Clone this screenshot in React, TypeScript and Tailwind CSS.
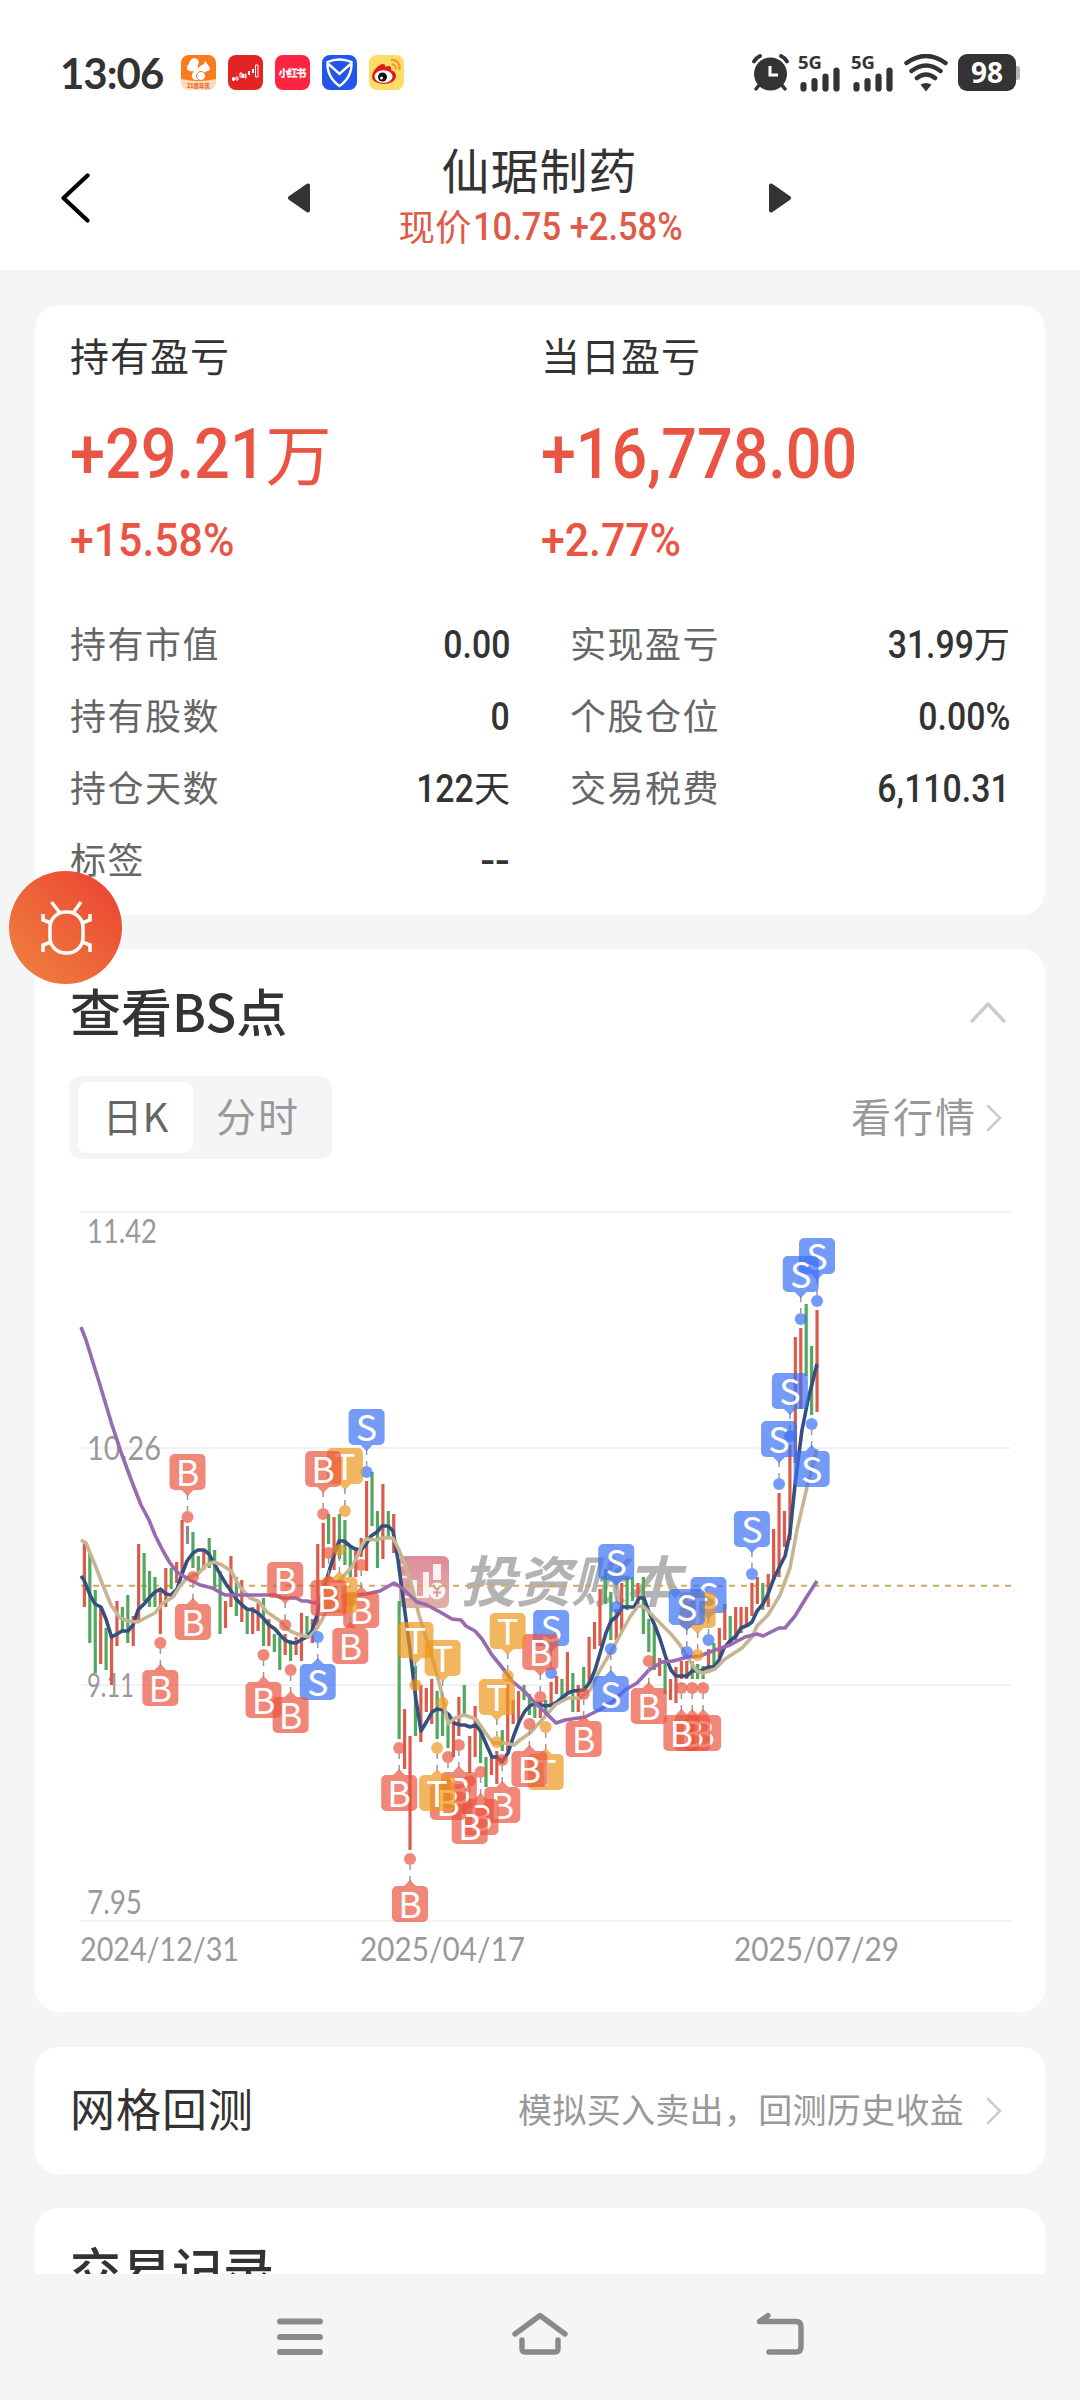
import type { ReactNode } from "react";

type MarkerType = "B" | "S" | "T";

// [high y, low y, colour]
const candles: [number, number, string][] = [
  [1541, 1607, "r"], [1553, 1643, "g"], [1590, 1673, "g"], [1607, 1664, "r"], [1628, 1670, "g"],
  [1637, 1685, "r"], [1601, 1646, "r"], [1607, 1631, "g"], [1595, 1643, "g"], [1616, 1646, "r"],
  [1544, 1622, "r"], [1553, 1601, "g"], [1571, 1607, "g"], [1577, 1607, "g"], [1590, 1634, "r"],
  [1568, 1607, "r"], [1568, 1589, "g"], [1562, 1583, "r"], [1520, 1573, "r"], [1526, 1544, "n"],
  [1532, 1568, "g"], [1556, 1573, "g"], [1550, 1570, "r"], [1538, 1568, "g"], [1550, 1589, "g"],
  [1571, 1634, "g"], [1601, 1628, "r"], [1556, 1607, "r"], [1577, 1616, "g"], [1580, 1622, "r"],
  [1610, 1634, "g"], [1607, 1634, "r"], [1603, 1631, "r"], [1598, 1646, "g"], [1619, 1646, "r"],
  [1634, 1652, "g"], [1637, 1670, "g"], [1634, 1655, "r"], [1640, 1661, "g"], [1637, 1655, "r"],
  [1613, 1661, "r"], [1616, 1634, "g"], [1619, 1643, "r"], [1544, 1628, "r"], [1523, 1568, "r"],
  [1514, 1544, "g"], [1517, 1570, "r"], [1514, 1559, "g"], [1520, 1565, "g"], [1547, 1577, "g"],
  [1547, 1577, "r"], [1538, 1557, "r"], [1481, 1571, "r"], [1472, 1526, "g"], [1511, 1568, "g"],
  [1484, 1559, "r"], [1511, 1537, "g"], [1514, 1553, "r"], [1601, 1739, "g"], [1709, 1769, "r"],
  [1736, 1850, "r"], [1666, 1736, "g"], [1685, 1742, "r"], [1688, 1712, "r"], [1679, 1724, "r"],
  [1691, 1739, "g"], [1712, 1736, "g"], [1715, 1748, "g"], [1723, 1757, "r"], [1697, 1736, "r"],
  [1685, 1716, "g"], [1736, 1773, "r"], [1706, 1757, "r"], [1726, 1763, "g"], [1757, 1787, "g"],
  [1755, 1775, "r"], [1751, 1784, "r"], [1730, 1751, "g"], [1684, 1751, "r"], [1700, 1724, "r"],
  [1691, 1721, "r"], [1685, 1700, "g"], [1694, 1715, "g"], [1703, 1718, "g"], [1701, 1718, "r"],
  [1700, 1715, "g"], [1682, 1706, "r"], [1676, 1694, "r"], [1679, 1700, "g"], [1652, 1694, "r"],
  [1673, 1712, "g"], [1685, 1712, "r"], [1667, 1691, "g"], [1637, 1684, "r"], [1622, 1649, "r"],
  [1589, 1646, "r"], [1569, 1604, "g"], [1592, 1640, "g"], [1609, 1640, "r"], [1583, 1631, "r"],
  [1577, 1610, "g"], [1577, 1601, "g"], [1583, 1604, "r"], [1577, 1634, "g"], [1619, 1652, "g"],
  [1626, 1670, "g"], [1658, 1676, "r"], [1661, 1694, "g"], [1679, 1700, "r"], [1667, 1703, "r"],
  [1661, 1679, "r"], [1661, 1679, "r"], [1661, 1679, "g"], [1664, 1679, "g"], [1666, 1679, "g"],
  [1649, 1673, "r"], [1643, 1667, "g"], [1628, 1657, "r"], [1604, 1640, "r"], [1616, 1643, "g"],
  [1607, 1640, "r"], [1607, 1633, "r"], [1607, 1627, "r"], [1583, 1616, "r"], [1577, 1604, "r"],
  [1583, 1610, "g"], [1574, 1607, "r"], [1529, 1580, "r"], [1493, 1577, "r"], [1511, 1547, "r"],
  [1445, 1540, "r"], [1337, 1463, "r"], [1328, 1409, "r"], [1304, 1376, "g"], [1346, 1415, "g"],
  [1310, 1412, "r"],
];

const candleColors: Record<string, string> = { r: "#dc5b4b", g: "#53a85f", n: "#8c8c8c" };

// [candle index, type, side of the label, dot y]
const markers: [number, MarkerType, "up" | "down", number][] = [
  [14, "B", "down", 1643], [19, "B", "up", 1517], [20, "B", "down", 1577], [33, "B", "down", 1655],
  [37, "B", "up", 1625], [38, "B", "down", 1670], [43, "S", "down", 1637], [44, "B", "up", 1514],
  [45, "B", "down", 1553], [47, "T", "down", 1550], [48, "T", "up", 1511], [49, "B", "down", 1601],
  [51, "B", "down", 1565], [52, "S", "up", 1472], [58, "B", "down", 1748], [60, "B", "down", 1859],
  [61, "T", "up", 1685], [65, "T", "down", 1748], [66, "T", "up", 1703], [67, "B", "down", 1757],
  [69, "B", "down", 1745], [71, "B", "down", 1781], [73, "B", "down", 1772], [76, "T", "up", 1742],
  [77, "B", "down", 1760], [78, "T", "up", 1676], [82, "B", "down", 1724], [84, "B", "up", 1697],
  [85, "T", "down", 1727], [86, "S", "up", 1673], [92, "B", "down", 1694], [97, "S", "down", 1649],
  [98, "S", "up", 1607], [104, "B", "down", 1661], [110, "B", "down", 1688], [111, "S", "up", 1652],
  [112, "B", "down", 1688], [113, "T", "up", 1655], [114, "B", "down", 1688], [115, "S", "up", 1640],
  [123, "S", "up", 1574], [128, "S", "up", 1484], [130, "S", "up", 1436], [132, "S", "up", 1319],
  [134, "S", "down", 1424], [135, "S", "up", 1301],
];

const markerColors: Record<MarkerType, string> = { B: "#e9543f", S: "#3b70f7", T: "#ee971c" };

const ma5 =
  "81,1576 84,1580 90,1595 95,1604 101,1607 106,1619 111.5,1637 117,1634 122,1631 128,1631 133,1625 138,1610 144,1604 149,1598 155,1592 160.5,1589 166,1594 171,1595 177,1589 182,1574 187,1561 193,1553 198,1550 204,1550 209,1554 214,1563 220,1574 226,1584 231,1591 237,1600 242,1605 247,1609 253,1610 258,1613 264,1619 269,1625 275,1629 280,1635 285,1640 290,1642.5 296,1643 301,1640 307,1637 312,1631 317,1615 322,1595 328,1575 334,1555 339,1541 344,1541 350,1546 355,1549 361,1550 366,1544 371,1536 377,1532 382,1526 388,1526 393,1531 398,1560 402,1590 410,1650 416,1700 421,1731 427,1721 432,1712 437,1709 443,1710 449,1715 454,1723 460,1725 465,1725 470,1727 476,1725 481,1732 487,1746 492,1757 497,1757 502,1762 508,1753 514,1735 519,1722 525,1711 530,1706 535,1703 541,1705 546,1706 552,1705 557,1702 563,1697 568,1693 573,1691 584,1690 590,1682 595,1670 601,1650 606,1633 611,1621 617,1616 622,1607 634,1607 639,1598 644,1598 649,1612 655,1626 660,1639 666,1658 671,1670 676,1676 687,1676 692,1671 700,1671 708,1667 714,1667 719,1660 724,1648 730,1641 736,1636 741,1628 748,1625 752,1622 757,1611 763,1604 768,1594 774,1578 779,1568 785,1556 790,1533 795,1485 802,1430 808,1400 817,1364";
const ma10 =
  "81,1540 86,1543 95,1565 104,1588 111,1605 120,1618 128,1621 138,1622 147,1617 155,1613 163,1603 173,1597 180,1586 187,1578 198,1574 206,1565 214,1562 222,1565 231,1571 240,1587 250,1598 258,1601 267,1612 280,1621 290,1631 300,1635 309,1637 315,1631 322,1620 331,1600 340,1580 352,1567 358,1555 362,1545 366,1539 377,1540 382,1538 393,1538 399,1550 409,1575 419,1615 430,1650 441,1690 448,1724 455,1718 464,1715 476,1719 485,1732 493,1743 505,1743 514,1745 520,1740 530,1733 541,1721 555,1705 568,1698 580,1698 590,1690 600,1670 612,1650 620,1635 630,1617 638,1606 644,1607 654,1617 671,1634 680,1645 690,1661 697,1671 703,1673 715,1669 725,1659 742,1648 752,1637 757,1626 768,1615 780,1595 790,1568 797,1530 807,1487 817,1449";
const ma30 =
  "81,1327 86,1340 100,1385 112,1425 122,1455 132,1482 141,1505 149,1520 155,1535 163,1551 170,1563 177,1572 190,1580 200,1585 212,1588 225,1595 275,1595 282,1598 296,1598 302,1601 307,1601 314,1603 325,1599 340,1597 355,1595 366,1594 380,1591 394,1583 402,1588 417,1602 427,1605 440,1612 452,1619 461,1620 466,1626 475,1631 482,1639 492,1655 505,1671 512,1681 525,1692 535,1703 545,1712 556,1723 565,1720 585,1717 601,1709 612,1702 625,1690 637,1683 649,1670 662,1662 673,1661 688,1657 700,1656 715,1650 730,1645 745,1637 757,1634 763,1636 779,1628 785,1628 795,1616 806,1598 817,1581";

const axisLabels: [string, number, number, number][] = [
  ["11.42", 87, 1243, 70],
  ["10.26", 87, 1460, 74],
  ["9.11", 87, 1697, 47],
  ["7.95", 87, 1914, 55],
  ["2024/12/31", 80, 1961, 159],
  ["2025/04/17", 360, 1961, 165],
  ["2025/07/29", 734, 1961, 165],
];

const candleX = (i: number) => 84.4 + i * 5.427;

function Marker({ x, y, type, side }: { x: number; y: number; type: MarkerType; side: "up" | "down" }) {
  const top = side === "up" ? y - 63 : y + 27;
  const dir = side === "up" ? -1 : 1;
  return (
    <g>
      <path d={`M${x} ${y + dir * 6}v${dir * 5}m0 ${dir * 6}v${dir * 6}`} stroke="#999" strokeWidth="1.5" />
      <circle cx={x} cy={y} r="6" fill={markerColors[type]} fillOpacity="0.7" />
      <path
        d={
          side === "up"
            ? `M${x - 13} ${top}h26a5 5 0 0 1 5 5v26a5 5 0 0 1-5 5h-7l-6 6l-6-6h-7a5 5 0 0 1-5-5v-26a5 5 0 0 1 5-5z`
            : `M${x - 13} ${top}h7l6-6l6 6h7a5 5 0 0 1 5 5v26a5 5 0 0 1-5 5h-26a5 5 0 0 1-5-5v-26a5 5 0 0 1 5-5z`
        }
        fill={markerColors[type]}
        fillOpacity="0.7"
      />
      <text x={x} y={top + 31.5} textAnchor="middle" fontSize="36" fill="#fff">
        {type}
      </text>
    </g>
  );
}

function KLineChart() {
  return (
    <svg viewBox="35 1159 1010 853" className="block w-[1010px] h-[853px] font-['Noto_Sans_CJK_SC',sans-serif]">
      <path d="M81 1212h930M81 1448h930M81 1685h930M81 1921h930" stroke="#f1f1f3" strokeWidth="2" />

      {/* Watermark */}
      <defs>
        <linearGradient id="watermark" x1="0" y1="0" x2="0" y2="1">
          <stop offset="0" stopColor="#dd8c9b" />
          <stop offset="1" stopColor="#e3b0a5" />
        </linearGradient>
      </defs>
      <rect x="399" y="1556" width="50" height="52" rx="6" fill="url(#watermark)" />
      <path d="M404 1596h8v-16h5v16h6v-24h6v26h-25zM433 1580v-16h8v16z" fill="#fff" fillOpacity="0.85" />
      <path d="M401 1565h6M401 1577h6" stroke="#fff" strokeOpacity="0.7" strokeWidth="2.5" />
      <circle cx="437" cy="1591" r="8.500" fill="#fff" fillOpacity="0.85" />
      <path d="M433.500 1586l3.500 4l3.500-4M437 1590v7M433 1592.500h8" fill="none" stroke="#de9c9c" strokeWidth="2" />
      <text transform="translate(461 1602) skewX(-14)" fontSize="55" fontWeight="700" fill="#b3b3b3" textLength="220">
        投资账本
      </text>

      <g fontSize="32" fill="#999" className="font-['Lato',sans-serif]">
        {axisLabels.map(([label, x, y, width]) => (
          <text key={label} x={x} y={y} textLength={width} lengthAdjust="spacingAndGlyphs">
            {label}
          </text>
        ))}
      </g>

      <path d="M81 1585.7h930" stroke="#cfa961" strokeWidth="2" strokeDasharray="6 6" />

      {candles.map(([high, low, color], i) => (
        <rect key={i} x={candleX(i) - 1.6} y={high} width="3.2" height={low - high} fill={candleColors[color]} />
      ))}

      <g fill="none" strokeWidth="3.6" strokeLinejoin="round">
        <polyline points={ma5} stroke="#34507f" />
        <polyline points={ma10} stroke="#c6b592" />
        <polyline points={ma30} stroke="#986ab1" />
      </g>

      {[...markers].reverse().map(([i, type, side, y]) => (
        <Marker key={`${i}-${side}`} x={candleX(i)} y={y} type={type} side={side} />
      ))}
    </svg>
  );
}

function AppIcons() {
  return (
    <div className="flex gap-[12px] ml-[17px]">
      <svg viewBox="0 0 35 35" className="w-[35px] h-[35px]">
        <rect width="35" height="35" rx="8" fill="#fdd9bd" />
        <path d="M8 0h19a8 8 0 0 1 8 8v16q-17 4-35 0V8a8 8 0 0 1 8-8z" fill="#fb7a1c" />
        <path d="M14 25c-5-2-3-7-1-9c-4 1-8-1-7-4c0-2 1-2 2-3c0-5 6-8 9-4c2 3-1 5 0 8c2-2 4-3 6-4l1-3l3 4c2 2 3 5 0 6c-2 0-4 1-3 3c1 3 0 5-2 6z" fill="#fff" />
        <circle cx="20" cy="21" r="4.5" fill="#fff" stroke="#fb7a1c" />
        <text x="17.5" y="33" textAnchor="middle" fontSize="5.500" fontWeight="900" fill="#ef6a1d">
          21周年庆
        </text>
      </svg>
      <svg viewBox="0 0 35 35" className="w-[35px] h-[35px]">
        <rect width="35" height="35" rx="8" fill="#e32424" />
        <path d="M4 24h3M5.500 22v4M15 19v4M21 16v4M25 14v4" stroke="#fff" strokeWidth="2" />
        <path d="M8 22h2v3h-2zM12 18h2v4h-2zM17 19v4h1v-4zM27.500 10h2.500v12h-2.500z" fill="none" stroke="#fff" />
      </svg>
      <svg viewBox="0 0 35 35" className="w-[35px] h-[35px]">
        <rect width="35" height="35" rx="8" fill="#fe2543" />
        <text x="17.500" y="22" textAnchor="middle" fontSize="10.500" fontWeight="900" fill="#fff" textLength="28">
          小红书
        </text>
      </svg>
      <svg viewBox="0 0 35 35" className="w-[35px] h-[35px]">
        <rect width="35" height="35" rx="8" fill="#2155ec" />
        <path d="M17.500 4.500C13 4.500 9 5.500 5.500 7c-.5 11 4 18.500 12 24c8-5.500 12.500-13 12-24c-3.500-1.500-7.500-2.500-12-2.500zM6.500 9l11 10l11-10" fill="none" stroke="#fff" strokeWidth="2.400" />
      </svg>
      <svg viewBox="0 0 35 35" className="w-[35px] h-[35px]">
        <rect width="35" height="35" rx="8" fill="#fddc67" />
        <path d="M3 22c0-6 7-13 11-13c3 0 2 3 2 3c4-2 7-1 6 3c3 1 5 3 5 6c0 5-6 8-12 8S3 26 3 22z" fill="#e31b1c" />
        <ellipse cx="14.500" cy="21.500" rx="9" ry="6.300" fill="#fff" />
        <circle cx="13.500" cy="22" r="4.500" fill="#111" />
        <circle cx="12.500" cy="23" r="1.500" fill="#fff" />
        <path d="M22 5c6-1 10 5 8 10M22.500 9.500c3-.5 5 2 4 5" fill="none" stroke="#f59b21" strokeWidth="2.200" />
      </svg>
    </div>
  );
}

function Signal() {
  return (
    <svg viewBox="0 0 44 38" className="w-[44px] h-[38px] overflow-visible">
      <text x="0" y="15" fontSize="18.500" fontWeight="700" fill="#333" textLength="24" className="font-['Open_Sans',sans-serif]">
        5G
      </text>
      <path d="M5.500 31v3.500M16.500 27v7.500M27.500 22.500v12M38.500 16.500v18" stroke="#333" strokeWidth="6.200" strokeLinecap="round" />
    </svg>
  );
}

function StatusBar() {
  return (
    <div className="h-[100px] pt-[45px] flex items-center pl-[60px] pr-[60px] bg-white">
      <span className="w-[104px] text-[42px] leading-[50px] font-bold tracking-[-1px] text-[#333] font-['Lato',sans-serif]">13:06</span>
      <AppIcons />
      <div className="ml-auto flex items-center">
        <svg viewBox="0 0 37 38" className="w-[37px] h-[38px]">
          <path d="M8 30l-4 5M29 30l4 5" stroke="#333" strokeWidth="3.500" strokeLinecap="round" />
          <circle cx="18.500" cy="20" r="16.500" fill="#333" />
          <path d="M2 7.500q2.500-4 6-5.500M35 7.500q-2.500-4-6-5.500" fill="none" stroke="#333" strokeWidth="3.800" strokeLinecap="round" />
          <path d="M18 12v9h8" fill="none" stroke="#fff" strokeWidth="3" />
        </svg>
        <div className="ml-[9px] flex gap-[9px]">
          <Signal />
          <Signal />
        </div>
        <svg viewBox="0 0 44 38" className="ml-[9px] w-[44px] h-[38px]">
          <path d="M2.500 9q19.500-14 39 0M7.500 17q14.500-11 29 0M13 24q9-7 18 0" fill="none" stroke="#333" strokeWidth="4.500" strokeLinecap="round" />
          <path d="M16.500 30.500q5.500-3 11 0l-5.500 7z" fill="#333" />
        </svg>
        <div className="ml-[10px] flex items-center">
          <div className="w-[58px] h-[37px] rounded-[9px] bg-[#333] text-white text-[28px] leading-[37px] font-bold text-center font-['Open_Sans',sans-serif]">
            98
          </div>
          <div className="w-[4px] h-[14px] rounded-r-[3px] bg-[#b5b5b5]" />
        </div>
      </div>
    </div>
  );
}

function Header() {
  return (
    <div className="h-[170px] pt-[26px] flex items-center bg-white text-[#333]">
      <svg viewBox="0 0 30 50" className="ml-[60px] w-[30px] h-[50px]">
        <path d="M27.500 2.500L3.500 25l24 22.500" fill="none" stroke="#000" strokeWidth="4.200" strokeLinecap="round" strokeLinejoin="round" />
      </svg>
      <svg viewBox="0 0 24 30" className="ml-[196px] w-[24px] h-[30px]">
        <path d="M22 2.500v25l-18-12.500z" fill="#333" stroke="#333" strokeWidth="4" strokeLinejoin="round" />
      </svg>
      <div className="w-[459px] pb-[5px] flex flex-col items-center">
        <div className="h-[60px] leading-[60px] text-[48px] tracking-[1px]">仙琚制药</div>
        <div className="h-[56px] leading-[56px] flex text-[#e05a48] text-[36.5px]">
          现价
          <Num className="ml-[1px] mr-[-29px] pt-[1px] text-[39px] scale-x-[0.885] origin-left">10.75 +2.58%</Num>
        </div>
      </div>
      <svg viewBox="0 0 24 30" className="w-[24px] h-[30px]">
        <path d="M2 2.500v25l18-12.500z" fill="#333" stroke="#333" strokeWidth="4" strokeLinejoin="round" />
      </svg>
    </div>
  );
}

function Num({ children, className = "" }: { children: ReactNode; className?: string }) {
  return <span className={`inline-block font-['Roboto',sans-serif] font-medium whitespace-pre ${className}`}>{children}</span>;
}

function Stat({ label, value, unit }: { label: string; value: string; unit?: string }) {
  return (
    <div className="h-[72px] flex items-center justify-between text-[36px]">
      <span className="pb-[4px] text-[#666] tracking-[1.500px]">{label}</span>
      <span className="text-[#333]">
        <Num className={value === "--" ? "text-[38px] scale-x-[1.15] origin-right" : "text-[38px] scale-x-[0.89] origin-right"}>
          {value}
        </Num>
        {unit}
      </span>
    </div>
  );
}

function SummaryCard() {
  return (
    <div className="h-[610px] rounded-[24px] bg-white pt-[14px] pl-[35px] pr-[35px]">
      <div className="flex">
        <div className="w-[471px]">
          <div className="h-[72px] leading-[70px] text-[39px] tracking-[1px] text-[#333]">持有盈亏</div>
          <div className="h-[126px] flex text-[#e95443]">
            <Num className="text-[70px] leading-[126px] scale-x-[0.9] origin-left">+29.21</Num>
            <span className="ml-[-22px] text-[66px] leading-[121px]">万</span>
          </div>
          <div className="h-[46px] leading-[46px] text-[#e95443]">
            <Num className="text-[46px] scale-x-[0.93] origin-left">+15.58%</Num>
          </div>
        </div>
        <div>
          <div className="h-[72px] leading-[70px] text-[39px] tracking-[1px] text-[#333]">当日盈亏</div>
          <div className="h-[126px] leading-[126px] text-[#e95443]">
            <Num className="text-[70px] scale-x-[0.897] origin-left">+16,778.00</Num>
          </div>
          <div className="h-[46px] leading-[46px] text-[#e95443]">
            <Num className="text-[46px] scale-x-[0.93] origin-left">+2.77%</Num>
          </div>
        </div>
      </div>
      <div className="mt-[45px] grid grid-cols-2 gap-x-[60px]">
        <Stat label="持有市值" value="0.00" />
        <Stat label="实现盈亏" value="31.99" unit="万" />
        <Stat label="持有股数" value="0" />
        <Stat label="个股仓位" value="0.00%" />
        <Stat label="持仓天数" value="122" unit="天" />
        <Stat label="交易税费" value="6,110.31" />
        <Stat label="标签" value="--" />
      </div>
    </div>
  );
}

function ChevronRight() {
  return (
    <svg viewBox="0 0 16 28" className="w-[16px] h-[28px]">
      <path d="M2 2l12 12l-12 12" fill="none" stroke="#ccc" strokeWidth="2.500" strokeLinecap="round" />
    </svg>
  );
}

function ChartCard() {
  return (
    <div className="mt-[34px] h-[1063px] rounded-[24px] bg-white pt-[23px]">
      <div className="h-[80px] pl-[35px] pr-[39px] flex items-center justify-between">
        <div className="text-[51px] leading-[76px] pb-[4px] font-medium text-[#333]">查看BS点</div>
        <svg viewBox="0 0 36 22" className="w-[36px] h-[22px]">
          <path d="M2 20L18 3l16 17" fill="none" stroke="#ccc" strokeWidth="3.500" strokeLinecap="round" strokeLinejoin="round" />
        </svg>
      </div>
      <div className="mt-[24px] h-[83px] pl-[34px] pr-[43px] flex items-center justify-between">
        <div className="w-[263px] h-[83px] rounded-[12px] bg-[#f4f5f7] pl-[9px] flex items-center text-[40px] leading-[66px]">
          <div className="w-[115px] h-[71px] rounded-[9px] bg-white text-center text-[#666]">日K</div>
          <div className="ml-[23px] h-[71px] text-[#999] tracking-[2px]">分时</div>
        </div>
        <div className="flex items-center gap-[9px] text-[40px] leading-[66px] text-[#999]">
          <span className="h-[71px] tracking-[2px]">看行情</span>
          <ChevronRight />
        </div>
      </div>
      <KLineChart />
    </div>
  );
}

function BugButton() {
  return (
    <button className="absolute left-[9px] top-[871px] w-[113px] h-[113px] rounded-full bg-linear-to-tr from-[#ef8240] to-[#ea3c31] flex items-center justify-center">
      <svg viewBox="0 0 52 58" className="w-[52px] h-[58px]">
        <g fill="none" stroke="#fff" strokeWidth="3.500">
          <rect x="10" y="13" width="33" height="41" rx="15.500" />
          <path d="M11.500 3L20 14M41 3L33 14M11 24l-8-3v-6M42 24l8-3v-6M11 43l-8 3v7M42 43l8 3v7" />
        </g>
      </svg>
    </button>
  );
}

function NavBar() {
  return (
    <div className="h-[126px] bg-[#f4f5f7] flex items-center justify-between px-[275px]">
      <svg viewBox="0 0 50 50" className="w-[50px] h-[50px]">
        <path d="M5 9.500h40M5 25h40M5 40h40" stroke="#8a8a8a" strokeWidth="5.800" strokeLinecap="round" />
      </svg>
      <svg viewBox="0 0 60 50" className="w-[60px] h-[50px]">
        <path d="M5 22L30 3.500l25 18.500M12 28v9q0 3 3 3h30q3 0 3-3v-9" fill="none" stroke="#8a8a8a" strokeWidth="5.400" strokeLinecap="round" strokeLinejoin="round" />
      </svg>
      <svg viewBox="0 0 50 50" className="w-[50px] h-[50px]">
        <path d="M14 40h27q5 0 5-5V14.500q0-5-5-5H4.500l8.500-6" fill="none" stroke="#8a8a8a" strokeWidth="5.400" strokeLinecap="round" strokeLinejoin="round" />
      </svg>
    </div>
  );
}

export default function App() {
  return (
    <div className="relative w-[1080px] h-[2400px] flex flex-col overflow-hidden bg-[#f4f5f7] font-['Noto_Sans_CJK_SC',sans-serif]">
      <StatusBar />
      <Header />

      <div className="flex-1 min-h-0 overflow-hidden pt-[35px] px-[35px]">
        <SummaryCard />
        <ChartCard />

        {/* Grid backtest */}
        <div className="mt-[35px] h-[127px] rounded-[24px] bg-white pl-[35px] pr-[43px] flex items-center justify-between">
          <span className="pb-[5px] text-[45px] tracking-[1px] text-[#333]">网格回测</span>
          <div className="flex items-center gap-[22px] text-[34px] tracking-[0.300px] text-[#999]">
            <span className="pb-[5px]">模拟买入卖出，回测历史收益</span>
            <ChevronRight />
          </div>
        </div>

        {/* Trade records */}
        <div className="mt-[34px] h-[300px] rounded-[24px] bg-white pt-[21px] pl-[35px]">
          <div className="text-[51px] leading-[80px] font-medium text-[#333]">交易记录</div>
        </div>
      </div>

      <NavBar />
      <BugButton />
    </div>
  );
}
